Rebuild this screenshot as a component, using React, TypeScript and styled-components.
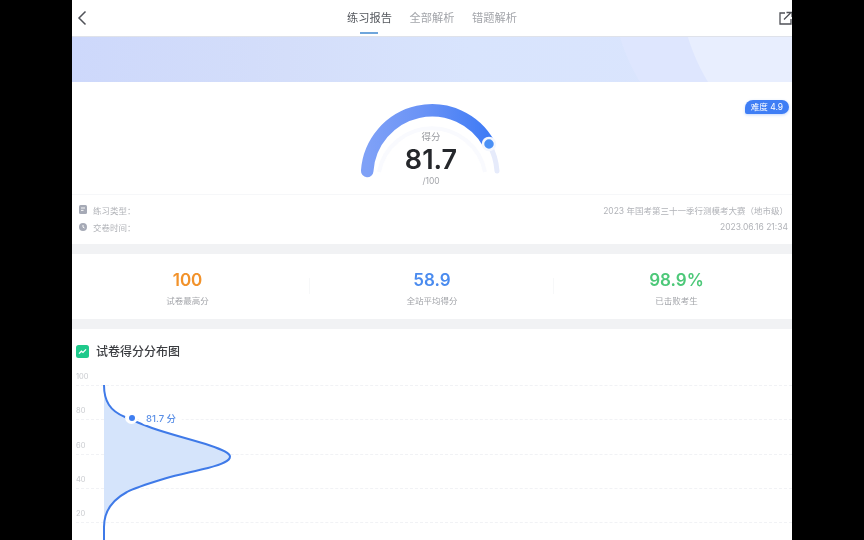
import React from "react";
import styled, { createGlobalStyle } from "styled-components";

const GlobalStyle = createGlobalStyle`
  html, body {
    margin: 0;
    padding: 0;
    background: #000;
    font-family: Inter, "Noto Sans CJK SC", sans-serif;
  }
`;

const Stage = styled.div`
  width: 864px;
  height: 540px;
  display: flex;
  justify-content: center;
  overflow: hidden;
  background: #000;
`;

const Screen = styled.main`
  width: 720px;
  height: 540px;
  overflow: hidden;
  background: #f1f2f4;
  filter: blur(0.45px);
`;

const Header = styled.header`
  height: 36px;
  background: #fff;
  border-bottom: 1px solid #dfe2ea;
  display: flex;
  align-items: center;
  justify-content: space-between;
  padding: 0 0 0 5px;
`;

const Tabs = styled.nav`
  display: flex;
  gap: 17.5px;
  margin-left: -2px;
`;

const Tab = styled.span<{ $active?: boolean }>`
  position: relative;
  font-size: 11.25px;
  line-height: 36px;
  color: ${(p) => (p.$active ? "#55585e" : "#a3a5aa")};

  &::after {
    content: "";
    display: ${(p) => (p.$active ? "block" : "none")};
    position: absolute;
    left: 13px;
    bottom: 2px;
    width: 18px;
    height: 2px;
    background: #6fa6dc;
  }
`;

const Hero = styled.div`
  height: 45px;
  background:
    radial-gradient(circle 197px at 804px -57px, #e8eefe 0 99.5%, transparent 100%),
    radial-gradient(circle 197px at 736px -57px, #dee6fe 0 99.5%, transparent 100%),
    linear-gradient(90deg, #cdd8fb 0%, #d4defa 30%, #d8e4fd 55%, #dbe5fd 100%);
`;

const Summary = styled.section`
  position: relative;
  height: 162px;
  padding: 18px 4px 0 0;
  box-sizing: border-box;
  background: #fff;
  margin-bottom: 10px;
`;

const Level = styled.span`
  position: absolute;
  top: 18px;
  right: 3px;
  height: 14px;
  width: 44px;
  display: flex;
  align-items: center;
  justify-content: center;
  color: #fff;
  font-size: 8.5px;
  line-height: 12px;
  padding-bottom: 1px;
  box-sizing: border-box;
  background: #3f7ef5;
  border-radius: 8px 7px 7px 2px;
  box-shadow: 0 1px 3px rgba(63, 126, 245, 0.3);
`;

const GaugeWrap = styled.div`
  position: relative;
  width: 160px;
  height: 94px;
  margin: 0 auto;
  left: 2px;
`;

const GaugeText = styled.div`
  position: absolute;
  top: 31px;
  left: 0;
  right: 2px;
  display: flex;
  flex-direction: column;
  align-items: center;
`;

const GaugeLabel = styled.span`
  font-size: 9.5px;
  line-height: 12px;
  color: #9a9ca1;
`;

const GaugeValue = styled.span`
  margin-top: 2px;
  font-size: 27px;
  line-height: 30px;
  font-weight: 600;
  color: #25272b;
`;

const GaugeTotal = styled.span`
  font-size: 8.5px;
  line-height: 12px;
  color: #a3a5aa;
`;

const InfoList = styled.div`
  border-top: 1px solid #f6f7f9;
  margin-right: -4px;
  padding: 6px 4px 0 7px;
`;

const InfoRow = styled.div`
  height: 17px;
  display: flex;
  align-items: center;
  gap: 6px;
  font-size: 8.5px;
  color: #b1b3b8;
`;

const InfoValue = styled.span`
  margin-left: auto;
`;

const Stats = styled.section`
  height: 65px;
  background: #fff;
  margin-bottom: 10px;
  display: grid;
  grid-template-columns: repeat(3, 244.5px);
  justify-content: center;
`;

const Stat = styled.div<{ $divider?: boolean }>`
  display: flex;
  flex-direction: column;
  align-items: center;
  padding-top: 15px;
  background: ${(p) =>
    p.$divider
      ? "linear-gradient(#f7f8f9, #f7f8f9) right 24px / 1px 16px no-repeat"
      : "none"};
`;

const StatValue = styled.span<{ $color: string }>`
  font-size: 17px;
  line-height: 22px;
  font-weight: 600;
  color: ${(p) => p.$color};
`;

const StatLabel = styled.span`
  margin-top: 4px;
  font-size: 8.5px;
  line-height: 12px;
  color: #a3a5aa;
`;

const ChartCard = styled.section`
  position: relative;
  height: 211px;
  background: #fff;
`;

const ChartTitle = styled.h2`
  height: 36px;
  margin: 0;
  padding: 16px 0 0 4px;
  box-sizing: border-box;
  display: flex;
  align-items: flex-start;
  gap: 7px;
  font-size: 12px;
  line-height: 13px;
  font-weight: 500;
  color: #3a3c40;
`;

const AxisRow = styled.div`
  height: 34.25px;
  box-sizing: border-box;
  margin-left: 4px;
  display: flex;
  align-items: flex-end;
  padding-bottom: 3px;
  border-bottom: 1px dashed #f1f2f5;
  font-size: 7.5px;
  line-height: 10px;
  color: #c9cbcf;

  &:first-of-type {
    height: 21px;
  }
`;

const CurveLayer = styled.svg`
  position: absolute;
  top: 0;
  left: 0;
`;

const Marker = styled.div`
  position: absolute;
  top: 81px;
  left: 53px;
  display: flex;
  align-items: center;
  gap: 2px;
`;

const MarkerDot = styled.span`
  width: 13px;
  height: 13px;
  display: flex;
  align-items: center;
  justify-content: center;
  background: #fff;
  border-radius: 7px;

  &::after {
    content: "";
    width: 6px;
    height: 6px;
    border-radius: 50%;
    background: #3f7ef0;
  }
`;

const MarkerLabel = styled.span`
  height: 15px;
  padding: 0 6px;
  display: flex;
  align-items: center;
  background: #fff;
  border-radius: 7px;
  font-size: 9.5px;
  font-weight: 500;
  color: #5a8fe6;
`;

const curve =
  "M32 56C32 72 38 82 53 88C62 92 72 96 80 99C100 106 122 111 138 116.5C151 121 158 124 158 127.5C158 132 151 135 136 139C120 143 105 146 93 149.5C75 155 62 159 55 163C42 170 32 180 32 198L32 211";

export default function App() {
  return (
    <Stage>
      <GlobalStyle />
      <Screen>
        <Header>
          <svg width="10" height="16" viewBox="0 0 10 16" fill="none">
            <path d="M8.5 1.5 2 8l6.5 6.5" stroke="#505258" strokeWidth="1.5" />
          </svg>
          <Tabs>
            <Tab $active>练习报告</Tab>
            <Tab>全部解析</Tab>
            <Tab>错题解析</Tab>
          </Tabs>
          <svg width="13" height="14" viewBox="0 0 13 14" fill="none">
            <path d="M6 2H1v11h11V8" stroke="#505258" strokeWidth="1.3" />
            <path d="M5 8.5 11.5 2M7.5 1.5H13V6" stroke="#505258" strokeWidth="1.3" />
          </svg>
        </Header>
        <Hero />
        <Summary>
          <Level>难度 4.9</Level>
          <GaugeWrap>
            <svg width="160" height="94" viewBox="0 0 160 94" fill="none">
              <defs>
                <linearGradient id="gaugeFill" gradientUnits="userSpaceOnUse" x1="15" y1="0" x2="137" y2="0">
                  <stop offset="0" stopColor="#7fa1f7" />
                  <stop offset="0.45" stopColor="#6a93f6" />
                  <stop offset="1" stopColor="#3f7bf5" />
                </linearGradient>
              </defs>
              <path d="M27 72A54 54 0 0 1 133 72" stroke="#f9fafe" strokeWidth="4" />
              <path d="M137 44A65 65 0 0 1 145 71" stroke="#e6ebfb" strokeWidth="5" strokeLinecap="round" />
              <path d="M15.2 71A65 65 0 0 1 137 44" stroke="url(#gaugeFill)" strokeWidth="12.5" strokeLinecap="round" />
              <circle cx="137" cy="44" r="6" fill="#4a90f5" stroke="#f4f7fe" strokeWidth="2.5" />
            </svg>
            <GaugeText>
              <GaugeLabel>得分</GaugeLabel>
              <GaugeValue>81.7</GaugeValue>
              <GaugeTotal>/100</GaugeTotal>
            </GaugeText>
          </GaugeWrap>
          <InfoList>
            <InfoRow>
              <svg width="8" height="9" viewBox="0 0 8 9">
                <rect width="8" height="9" rx="1.5" fill="#a6aab6" />
                <path d="M2 3h4M2 5.4h2.5" stroke="#fff" strokeWidth="0.9" />
              </svg>
              <span>练习类型：</span>
              <InfoValue>2023 年国考第三十一季行测模考大赛（地市级）</InfoValue>
            </InfoRow>
            <InfoRow>
              <svg width="8" height="8" viewBox="0 0 8 8">
                <circle cx="4" cy="4" r="4" fill="#a6aab6" />
                <path d="M4 2v2.2l1.5.8" stroke="#fff" strokeWidth="0.9" fill="none" />
              </svg>
              <span>交卷时间：</span>
              <InfoValue>2023.06.16 21:34</InfoValue>
            </InfoRow>
          </InfoList>
        </Summary>
        <Stats>
          <Stat $divider>
            <StatValue $color="#f2922a">100</StatValue>
            <StatLabel>试卷最高分</StatLabel>
          </Stat>
          <Stat $divider>
            <StatValue $color="#4a8bef">58.9</StatValue>
            <StatLabel>全站平均得分</StatLabel>
          </Stat>
          <Stat>
            <StatValue $color="#4cc878">98.9%</StatValue>
            <StatLabel>已击败考生</StatLabel>
          </Stat>
        </Stats>
        <ChartCard>
          <ChartTitle>
            <svg width="13" height="13" viewBox="0 0 13 13">
              <rect width="13" height="13" rx="2.5" fill="#1fc98b" />
              <path d="M3 8.6 5.4 6.2 7 7.4 10 4.4" stroke="#fff" strokeWidth="1.3" fill="none" />
            </svg>
            试卷得分分布图
          </ChartTitle>
          {[100, 80, 60, 40, 20].map((v) => (
            <AxisRow key={v}>{v}</AxisRow>
          ))}
          <CurveLayer width="720" height="211" viewBox="0 0 720 211" fill="none">
            <path d={curve} fill="#d5e4fb" />
            <path d={curve} stroke="#3f7ae8" strokeWidth="2" />
          </CurveLayer>
          <Marker>
            <MarkerDot />
            <MarkerLabel>81.7 分</MarkerLabel>
          </Marker>
        </ChartCard>
      </Screen>
    </Stage>
  );
}
